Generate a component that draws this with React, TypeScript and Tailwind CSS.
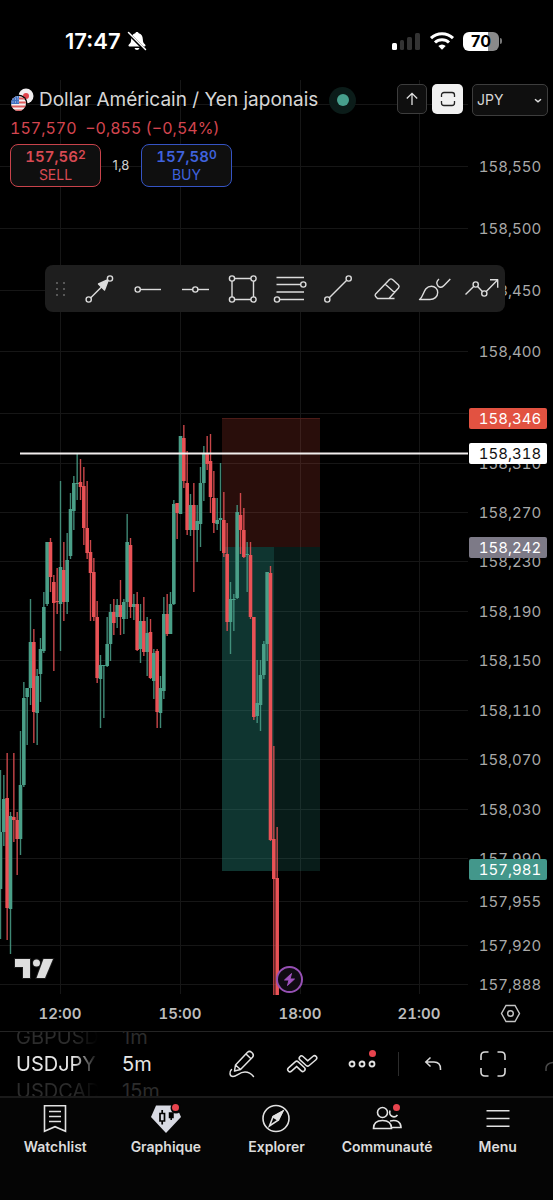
import { ReactNode } from 'react';

type Candle = [high: number, top: number, bottom: number, low: number, up: 0 | 1];

// One entry per 5 minute bar, starting at 10:30. Values are y positions on the plot.
const CANDLES: Candle[] = [
  [690, 752, 809, 859, 1], [695, 719, 752, 766, 1], [673, 718, 828, 860, 0], [732, 736, 829, 874, 1],
  [673, 737, 740, 762, 0], [732, 740, 759, 795, 0], [651, 705, 759, 775, 1], [602, 618, 705, 707, 1],
  [608, 608, 617, 665, 1], [519, 562, 608, 625, 1], [549, 562, 632, 663, 0], [589, 596, 633, 665, 1],
  [558, 569, 594, 622, 1], [512, 527, 571, 573, 1], [462, 462, 524, 526, 1], [458, 462, 497, 512, 0],
  [495, 502, 523, 591, 0], [488, 521, 522, 534, 0], [401, 487, 524, 571, 1], [462, 490, 522, 541, 0],
  [453, 480, 522, 534, 1], [413, 429, 476, 479, 1], [396, 403, 431, 450, 1], [373, 403, 404, 420, 1],
  [379, 402, 407, 420, 0], [387, 406, 448, 465, 0], [401, 448, 473, 479, 0], [460, 472, 493, 541, 0],
  [478, 492, 537, 541, 0], [521, 537, 598, 603, 0], [575, 585, 599, 648, 1], [585, 585, 586, 638, 1],
  [537, 564, 586, 587, 1], [524, 532, 564, 581, 1], [519, 532, 543, 555, 0], [519, 525, 537, 548, 1],
  [500, 525, 537, 555, 0], [519, 522, 539, 554, 1], [434, 462, 522, 539, 1], [458, 465, 527, 538, 0],
  [514, 524, 527, 540, 1], [512, 524, 570, 571, 0], [524, 541, 569, 583, 1], [517, 541, 572, 576, 0],
  [537, 553, 572, 596, 1], [539, 552, 598, 599, 0], [569, 573, 601, 619, 1], [569, 571, 632, 648, 0],
  [596, 608, 633, 648, 1], [517, 534, 611, 619, 1], [514, 534, 554, 556, 0], [512, 524, 554, 554, 1],
  [420, 424, 524, 525, 1], [423, 423, 433, 459, 0], [356, 356, 434, 434, 1], [345, 358, 401, 408, 0],
  [371, 403, 450, 455, 0], [414, 425, 450, 456, 1], [403, 425, 450, 512, 0], [425, 441, 450, 482, 1],
  [387, 403, 444, 467, 1], [366, 373, 403, 421, 1], [356, 374, 384, 390, 0], [354, 381, 417, 433, 0],
  [391, 418, 443, 453, 0], [418, 440, 444, 450, 1], [383, 438, 440, 471, 1], [412, 440, 473, 477, 0],
  [443, 474, 542, 551, 0], [502, 519, 542, 574, 1], [514, 519, 520, 551, 1], [425, 432, 518, 519, 1],
  [413, 435, 450, 474, 0], [428, 450, 477, 478, 0], [462, 474, 475, 512, 1], [462, 475, 537, 539, 0],
  [537, 537, 637, 640, 0], [580, 623, 636, 643, 1], [580, 595, 625, 651, 1], [561, 564, 595, 599, 1],
  [492, 492, 564, 581, 1], [486, 493, 760, 761, 0], [666, 759, 799, 915, 0], [747, 798, 915, 915, 0],
];

const TIMES = [
  { label: '12:00', x: 60 },
  { label: '15:00', x: 180 },
  { label: '18:00', x: 300 },
  { label: '21:00', x: 419 },
];

const PRICES = [
  158.6, 158.55, 158.5, 158.45, 158.4, 158.35, 158.31, 158.27, 158.23, 158.19, 158.15, 158.11,
  158.07, 158.03, 157.99, 157.955, 157.92, 157.888,
];

const TAGS = [
  { price: 158.346, fill: '#e25241', color: '#ffffff' },
  { price: 158.318, fill: '#ffffff', color: '#111111' },
  { price: 158.242, fill: '#7d7a87', color: '#ffffff' },
  { price: 157.981, fill: '#43978b', color: '#ffffff' },
];

const UP = '#4a9f88';
const DOWN = '#ea5256';

const priceToY = (price: number) => Math.round(432 + (158.27 - price) * 1236);
const formatPrice = (price: number) => price.toFixed(3).replace('.', ',');

function StatusBar() {
  return (
    <header className="flex h-20 items-start justify-between pl-[65px] pr-[51px] pt-[26px]">
      <div className="flex h-[30px] items-center gap-1.5">
        <span className="text-[22px] font-semibold leading-[30px] text-white">17:47</span>
        <svg width="20" height="20" viewBox="0 0 20 20">
          <path
            d="M10 1c-.9 0-1.600.6-1.700 1.300C5.600 3 4.300 5.200 4.200 8c-.1 3-.7 4.200-2.300 5.600-.8.8-.5 1.900.6 1.900h15c1.100 0 1.400-1.100.6-1.900C16.500 12.200 15.900 11 15.800 8c-.1-2.800-1.400-5-4.100-5.700C11.600 1.600 10.900 1 10 1z"
            fill="#fff"
          />
          <path d="M7.500 17h5a2.600 2.600 0 0 1-5 0z" fill="#fff" />
          <path d="M1.500 2.500 18 19" stroke="#000" strokeWidth="3" />
          <path d="M1.500 1.500 18.500 18.500" stroke="#fff" strokeWidth="1.500" strokeLinecap="round" />
        </svg>
      </div>
      <div className="flex h-[30px] items-center gap-2">
        <svg width="29" height="18" viewBox="0 0 29 18">
          <rect x="0" y="11" width="5" height="7" rx="1.500" fill="#fff" />
          <rect x="8" y="8" width="4" height="10" rx="1.500" fill="#333" />
          <rect x="15" y="5" width="5" height="13" rx="1.500" fill="#333" />
          <rect x="23" y="1" width="5" height="17" rx="1.500" fill="#333" />
        </svg>
        <svg width="26" height="18" viewBox="0 0 26 18" fill="none" stroke="#fff" strokeWidth="3">
          <path d="M2 6.200a16 16 0 0 1 22 0" />
          <path d="M6 10.500a10 10 0 0 1 14 0" />
          <path d="M13 17.800 9.300 14a5.300 5.300 0 0 1 7.400 0z" fill="#fff" stroke="none" />
        </svg>
        <div className="flex items-center gap-px">
          <div className="flex h-[19px] w-9 items-center justify-center rounded-md bg-linear-to-r from-white from-70% to-[#8a8a8a] to-70%">
            <span className="text-base font-bold leading-[19px] text-black">70</span>
          </div>
          <div className="h-1.5 w-0.5 rounded-r bg-[#777]" />
        </div>
      </div>
    </header>
  );
}

function Plot() {
  return (
    <svg className="h-[951px] min-w-0 flex-1" role="img" aria-label="USDJPY 5m">
      <g stroke="#161616">
        {PRICES.map((price) => (
          <line key={price} x1="0" x2="100%" y1={priceToY(price) + 0.5} y2={priceToY(price) + 0.5} />
        ))}
        {TIMES.map(({ label, x }) => (
          <line key={label} x1={x + 0.5} x2={x + 0.5} y1="0" y2="914" />
        ))}
      </g>

      {/* Short position */}
      <rect x="222" y="338" width="98" height="129" fill="#e6503f" fillOpacity="0.18" />
      <rect x="222" y="467" width="98" height="324" fill="#2f9b8a" fillOpacity="0.18" />
      <rect x="222" y="467" width="52" height="324" fill="#2f9b8a" fillOpacity="0.2" />
      <path d="M222 338.500h98" stroke="#4d1c18" />

      {CANDLES.map(([high, top, bottom, low, up], i) => {
        const x = (i * 10) / 3;
        const color = up ? UP : DOWN;
        return (
          <g key={i} fill={color}>
            <rect x={x - 0.2} y={high} width="1.400" height={low - high} fillOpacity="0.85" />
            <rect x={x - 1.3} y={top} width="3.600" height={Math.max(bottom - top, 1)} />
          </g>
        );
      })}

      <line x1="20" x2="100%" y1="373.500" y2="373.500" stroke="#f2eeee" strokeWidth="2" />

      {/* Watermark */}
      <g fill="#dedede" stroke="#1a1a1a" strokeWidth="2" paintOrder="stroke">
        <path d="M15 879h15v19h-7v-11h-8z" />
        <circle cx="36.500" cy="883" r="3.500" />
        <path d="M43.500 879h9.500l-8 19h-8.500z" />
      </g>

      {/* News event */}
      <circle cx="289.500" cy="899.500" r="12.500" fill="#100b13" stroke="#9650b4" strokeWidth="2" />
      <path d="M291.500 893.500l-7 6.500h4.500l-1.500 5.500 7-6.500h-4.500z" fill="#a052be" stroke="#a052be" strokeLinejoin="round" />

      <g className="text-[15px] font-semibold tabular-nums" fill="#bdbdbd" textAnchor="middle">
        {TIMES.map(({ label, x }) => (
          <text key={label} x={x} y="939">
            {label}
          </text>
        ))}
      </g>
    </svg>
  );
}

function PriceAxis() {
  return (
    <svg className="h-[951px] w-[85px] shrink-0 text-[15px] tabular-nums">
      <g fill="#a9a9a9" textAnchor="middle">
        {PRICES.slice(1).map((price) => (
          <text key={price} x="42" y={priceToY(price) + 6}>
            {formatPrice(price)}
          </text>
        ))}
      </g>
      {TAGS.map(({ price, fill, color }) => (
        <g key={price} textAnchor="middle">
          <rect x="1" y={priceToY(price) - 10} width="78" height="21" rx="2" fill={fill} />
          <text x="42" y={priceToY(price) + 6} fill={color}>
            {formatPrice(price)}
          </text>
        </g>
      ))}
      <g fill="none" stroke="#c4c4c4" strokeWidth="1.400">
        <path d="M38 925.500h9l4.500 8-4.500 8h-9l-4.500-8z" />
        <circle cx="42.500" cy="933.500" r="2.800" />
      </g>
    </svg>
  );
}

function PairLogo() {
  return (
    <svg className="shrink-0" width="24" height="24" viewBox="0 0 24 24">
      <circle cx="16" cy="8" r="7.500" fill="#f1eef0" />
      <circle cx="16" cy="8" r="3" fill="#e0434c" />
      <circle cx="8.500" cy="15.500" r="9" fill="#000" />
      <clipPath id="us">
        <circle cx="8.500" cy="15.500" r="7.500" />
      </clipPath>
      <g clipPath="url(#us)">
        <rect width="24" height="24" fill="#f3f0f1" />
        <path d="M0 10.500h18M0 14.500h18M0 18.500h18M0 22.300h18" stroke="#dc5a5c" strokeWidth="1.800" />
        <rect x="0" y="7" width="9" height="9" fill="#3f6fc0" />
        <path d="M2.500 11h6M2.500 14h6M4.500 9h4" stroke="#cfdcf3" strokeDasharray="1 1.500" />
      </g>
    </svg>
  );
}

function ChartHeader() {
  return (
    <div className="absolute inset-x-0 top-0 pl-2.5 pr-[5px] pt-1">
      <div className="flex items-start justify-between">
        <div className="flex h-8 items-center gap-[5px]">
          <PairLogo />
          <h1 className="whitespace-nowrap text-[19px] leading-8 text-[#d6d6d6]">
            Dollar Américain / Yen japonais
          </h1>
          <span className="ml-1.5 flex size-[27px] items-center justify-center rounded-full bg-[#0b1c19]">
            <span className="size-3 rounded-full bg-[#47a08d]" />
          </span>
        </div>
        <div className="flex items-start">
          <button
            aria-label="Agrandir"
            className="flex size-[30px] items-center justify-center rounded-[5px] border border-[#3d3d3d] bg-[#0f0f0f]"
          >
            <svg width="14" height="14" viewBox="0 0 14 14" fill="none" stroke="#e0e0e0" strokeWidth="1.300">
              <path d="M7 13V1.500M1.800 6.500 7 1.300l5.200 5.200" />
            </svg>
          </button>
          <button
            aria-label="Ajuster"
            className="ml-[5px] flex h-[30px] w-[31px] items-center justify-center rounded-[5px] bg-[#f1f1f1]"
          >
            <svg width="16" height="16" viewBox="0 0 16 16" fill="none" stroke="#222" strokeWidth="1.300">
              <path d="M1.500 6V4a2.500 2.500 0 0 1 2.500-2.500h8A2.500 2.500 0 0 1 14.500 4v2M1.500 10v2A2.500 2.500 0 0 0 4 14.500h8a2.500 2.500 0 0 0 2.500-2.500v-2" />
            </svg>
          </button>
          <div className="relative ml-[9px]">
            <select
              aria-label="Devise"
              defaultValue="JPY"
              className="h-8 w-[76px] appearance-none rounded-[5px] border border-[#3d3d3d] bg-[#0f0f0f] pl-1 text-sm text-[#d6d6d6]"
            >
              <option>JPY</option>
            </select>
            <svg
              className="pointer-events-none absolute right-[6px] top-[14px]"
              width="8"
              height="6"
              viewBox="0 0 8 6"
              fill="none"
              stroke="#e0e0e0"
              strokeWidth="1.500"
            >
              <path d="M1 1.200l3 2.600 3-2.600" />
            </svg>
          </div>
        </div>
      </div>

      <p className="whitespace-pre text-base leading-6 tabular-nums text-[#d3454f]">157,570  −0,855 (−0,54%)</p>

      <div className="mt-1 flex items-center">
        <button className="h-[43px] w-[91px] rounded-lg border border-[#c8434b] bg-[#0f0f0f] text-[#d94a53]">
          <span className="flex justify-center text-[15px] font-semibold leading-[18px] tabular-nums">
            157,56<span className="text-xs leading-[14px]">2</span>
          </span>
          <span className="block text-sm leading-[18px]">SELL</span>
        </button>
        <span className="w-10 text-center text-[13px] text-[#cfcfcf]">1,8</span>
        <button className="h-[43px] w-[91px] rounded-lg border border-[#3554c4] bg-[#0f0f0f] text-[#3f62dd]">
          <span className="flex justify-center text-[15px] font-semibold leading-[18px] tabular-nums">
            157,58<span className="text-xs leading-[14px]">0</span>
          </span>
          <span className="block text-sm leading-[18px]">BUY</span>
        </button>
      </div>
    </div>
  );
}

function Dot({ x, y }: { x: number; y: number }) {
  return <circle cx={x} cy={y} r="2.600" fill="#1e1e1e" />;
}

const TOOLS: { name: string; icon: ReactNode }[] = [
  {
    name: 'Flèche',
    icon: (
      <>
        <path d="M6 26.500 20 12.500" />
        <path d="M25.500 6.500 15.500 11l6 6z" fill="#dcdcdc" />
        <Dot x={5.7} y={26.5} />
        <Dot x={27} y={5.5} />
      </>
    ),
  },
  { name: 'Rayon horizontal', icon: <><path d="M7 16.500h23" /><Dot x={6.7} y={16.5} /></> },
  { name: 'Ligne horizontale', icon: <><path d="M3 16.500h27" /><Dot x={16.3} y={16.5} /></> },
  {
    name: 'Rectangle',
    icon: (
      <>
        <path d="M5 5.500h21.500v21H5z" />
        <Dot x={5} y={5.5} />
        <Dot x={26.5} y={5.5} />
        <Dot x={5} y={26.5} />
        <Dot x={26.5} y={26.5} />
      </>
    ),
  },
  {
    name: 'Fibonacci',
    icon: (
      <>
        <path d="M1.500 4.500h27.500M1.500 11.500h27M1.500 19h27.500M2 26.500h27" />
        <Dot x={28.3} y={11.5} />
        <Dot x={2} y={26.5} />
      </>
    ),
  },
  {
    name: 'Ligne de tendance',
    icon: <><path d="M4.500 26.500 25.500 5.500" /><Dot x={4.3} y={26.5} /><Dot x={25.7} y={5.5} /></>,
  },
  {
    name: 'Gomme',
    icon: <path d="M18.500 6.500q1.500-1.200 3 0l6 5.500q1.300 1.300 0 3L18 25.500H6.500L4.600 23.600q-1-1.300 0-2.600zM14 11l9.500 8.500M18 25.500h5.500" />,
  },
  {
    name: 'Pinceau',
    icon: (
      <path d="M.5 26.500C5 24 4 13.200 12.500 13.200c3.500 0 6.200 2.600 6.200 6.300 0 4.300-3.500 7-7.700 7zM20 6c-2.600 2.300-2.600 5-1 7 2 2 4 1.600 6-.5L31.300 6" />
    ),
  },
  {
    name: 'Prévision',
    icon: (
      <>
        <path d="M-1.500 21.500 8.700 11.500l8.600 9L30.500 7M23 6.800h7.700v8" />
        <Dot x={8.7} y={11.5} />
        <Dot x={17.3} y={20.5} />
      </>
    ),
  },
];

function DrawingToolbar() {
  return (
    <div className="absolute left-[45px] top-[185px] flex h-[47px] items-center gap-4 rounded-lg bg-[#1e1e1e] pl-2 pr-1.5">
      <div className="grid w-3.5 grid-cols-2 justify-items-center gap-y-1">
        {[0, 1, 2, 3, 4, 5].map((i) => (
          <span key={i} className="size-0.5 rounded-full bg-[#6b6b6b]" />
        ))}
      </div>
      {TOOLS.map(({ name, icon }) => (
        <button key={name} aria-label={name} className="size-8">
          <svg
            className="size-8 overflow-visible"
            viewBox="0 0 32 32"
            fill="none"
            stroke="#dcdcdc"
            strokeWidth="1.400"
            strokeLinejoin="round"
          >
            {icon}
          </svg>
        </button>
      ))}
    </div>
  );
}

function Wheel({ items, className }: { items: string[]; className: string }) {
  return (
    <div className={`flex h-16 shrink-0 flex-col justify-center overflow-hidden ${className}`}>
      {items.map((item, i) => (
        <button
          key={item}
          className={
            i === 1
              ? 'shrink-0 text-left text-xl leading-9 text-[#e6e6e6]'
              : 'shrink-0 text-left text-xl leading-[18px] text-[#2c2c2c]'
          }
        >
          {item}
        </button>
      ))}
    </div>
  );
}

function Badge({ className }: { className: string }) {
  return <span className={`absolute size-[7px] rounded-full bg-[#e8444e] ${className}`} />;
}

function BottomToolbar() {
  return (
    <div className="relative flex h-[65px] items-center overflow-hidden border-t border-[#242424] pl-4">
      <Wheel
        items={['GBPUSD', 'USDJPY', 'USDCAD']}
        className="w-[82px] bg-black mask-r-from-70% mask-r-to-100%"
      />
      <Wheel items={['1m', '5m', '15m']} className="ml-6 w-[60px]" />
      <div className="flex flex-1 items-center justify-end">
        <button aria-label="Dessiner" className="flex w-[60px] justify-center">
          <svg width="28" height="30" viewBox="0 0 28 30" fill="none" stroke="#e2e2e2" strokeWidth="1.500" strokeLinejoin="round" strokeLinecap="round">
            <path d="M7.500 16 19.500 3.200q2-1.700 4 0l1 1q1.700 2 0 4L12.500 20.500 6.500 22zM7.500 16l5 4.500M18 5l5 4.800" />
            <path d="M3.500 20.500C1 23 1.500 27.500 5 27.500c4 0 6-4.500 12-4.500 4.500 0 6.500 2 8.500 4.500" />
          </svg>
        </button>
        <button aria-label="Indicateurs" className="flex w-[60px] justify-center">
          <svg className="overflow-visible" width="30" height="20" viewBox="0 0 30 20" fill="none" strokeLinecap="round" strokeLinejoin="round">
            <path d="M3 15.500 9.700 9.500 15.800 15.200" stroke="#e2e2e2" strokeWidth="6" />
            <path d="M3 15.500 9.700 9.500 15.800 15.200" stroke="#000" strokeWidth="3" />
            <path d="M14.500 4.200 20.700 9.800 27.500 4" stroke="#e2e2e2" strokeWidth="6" />
            <path d="M14.500 4.200 20.700 9.800 27.500 4" stroke="#000" strokeWidth="3" />
          </svg>
        </button>
        <button aria-label="Plus" className="relative flex w-[60px] justify-center">
          <svg width="28" height="8" viewBox="0 0 28 8" fill="none" stroke="#e2e2e2" strokeWidth="1.800">
            <circle cx="4" cy="4" r="2.500" />
            <circle cx="14" cy="4" r="2.500" />
            <circle cx="24" cy="4" r="2.500" />
          </svg>
          <Badge className="-top-[10px] right-4" />
        </button>
        <span className="ml-1.5 h-6 w-px bg-[#2c2c2c]" />
        <button aria-label="Annuler" className="flex w-[68px] justify-center">
          <svg width="18" height="16" viewBox="0 0 18 16" fill="none" stroke="#dadada" strokeWidth="1.500">
            <path d="M6.500 1.500 1.800 6l4.700 4.500M2 6h8c4 0 6.500 2.500 6.500 7v1" />
          </svg>
        </button>
        <button aria-label="Plein écran" className="flex w-[52px] justify-center">
          <svg width="28" height="28" viewBox="0 0 28 28" fill="none" stroke="#dadada" strokeWidth="1.600">
            <path d="M2 10V6q0-4 4-4h3.500M18.500 2H22q4 0 4 4v4M26 18v4q0 4-4 4h-3.500M9.500 26H6q-4 0-4-4v-4" />
          </svg>
        </button>
        <svg className="ml-6 mt-1 shrink-0" width="10" height="14" viewBox="0 0 10 14" fill="none" stroke="#4a4a4a" strokeWidth="1.500">
          <path d="M3 12V9.500C3 6.500 5 4 10 3.500" />
        </svg>
      </div>
    </div>
  );
}

const TABS: { label: string; badge?: string; icon: ReactNode }[] = [
  {
    label: 'Watchlist',
    icon: <path d="M4.500 1.700h21v25.500L15 22.700l-10.500 4.500zM9 7.500h12M9 12.500h12M9 17.500h12" />,
  },
  {
    label: 'Graphique',
    badge: 'top-0 right-0.5',
    icon: (
      <>
        <path d="M5 1.500h20l5 11.500-15 16L0 13z" fill="#d8dae3" stroke="none" />
        <path d="M9 9.500h4.500v7.500H9zM11.200 6v3.500M11.200 17v3.500" stroke="#000" strokeWidth="1.700" />
        <path d="M18.500 9h3.500v4.500h-3.500zM20.200 13v3" fill="#000" stroke="#000" strokeWidth="1.500" />
        <circle cx="25" cy="4" r="5.500" fill="#050505" stroke="none" />
      </>
    ),
  },
  {
    label: 'Explorer',
    icon: (
      <>
        <circle cx="15" cy="14.500" r="13" />
        <path d="M21.500 7.500 17.500 16l-9 6L12 12.800z" />
        <path d="M21.500 7.500 17 15.500l-4.500-3.200z" fill="#e2e2e2" />
        <path d="M12 12.800l5.500 3.600" />
      </>
    ),
  },
  {
    label: 'Communauté',
    badge: 'top-0 right-0.5',
    icon: (
      <>
        <circle cx="10.500" cy="8.500" r="5" />
        <path d="M1.500 24.500C1.500 19 4.500 16.500 10.500 16.500s9 2.500 9 8zM18 6.500c-1.500 5.500 4 8.500 7.500 4.500M18 17c7-1.500 11 1 11 6.500h-9" />
      </>
    ),
  },
  { label: 'Menu', icon: <path d="M3.500 6.700h23M3.500 14.500h23M3.500 22.200h23" /> },
];

function TabBar() {
  return (
    <nav className="grid flex-1 grid-cols-5 items-start border-t-2 border-[#1a1a1a] bg-[#050505]">
      {TABS.map(({ label, badge, icon }) => (
        <button key={label} className="flex flex-col items-center pt-1.5 text-[#dcdcdc]">
          <span className="relative">
            <svg width="30" height="29" viewBox="0 0 30 29" fill="none" stroke="#e2e2e2" strokeWidth="1.600">
              {icon}
            </svg>
            {badge && <Badge className={badge} />}
          </span>
          <span className="mt-1 text-sm font-semibold leading-5">{label}</span>
        </button>
      ))}
    </nav>
  );
}

export default function App() {
  return (
    <div className="flex min-h-screen flex-col overflow-hidden bg-black font-['Inter',sans-serif]">
      <StatusBar />
      <main className="relative flex">
        <Plot />
        <PriceAxis />
        <ChartHeader />
        <DrawingToolbar />
      </main>
      <BottomToolbar />
      <TabBar />
    </div>
  );
}
